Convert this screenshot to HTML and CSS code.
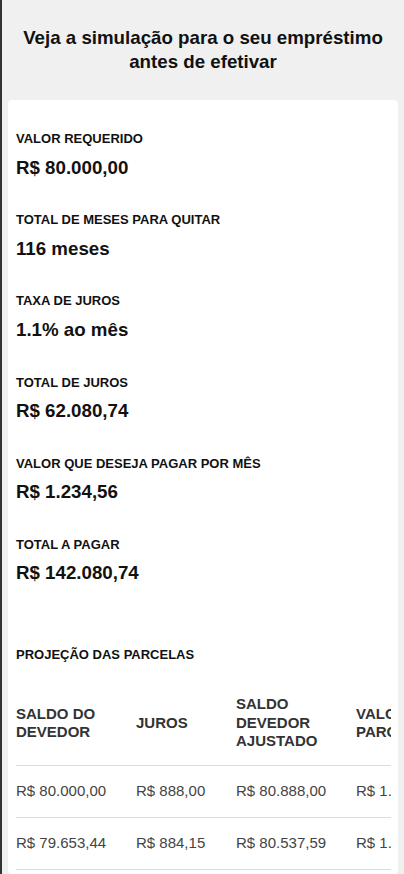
FILE: index.html
```html
<!DOCTYPE html>
<html lang="pt-BR">
<head>
<meta charset="utf-8">
<title>Simulação</title>
<link rel="stylesheet" href="styles.css">
</head>
<body>
<div class="page">
  <h1 class="title">Veja a simulação para o seu empréstimo antes de efetivar</h1>
  <div class="card">
    <div class="item"><div class="label">VALOR REQUERIDO</div><div class="value">R$ 80.000,00</div></div>
    <div class="item"><div class="label">TOTAL DE MESES PARA QUITAR</div><div class="value">116 meses</div></div>
    <div class="item"><div class="label">TAXA DE JUROS</div><div class="value">1.1% ao mês</div></div>
    <div class="item"><div class="label">TOTAL DE JUROS</div><div class="value">R$ 62.080,74</div></div>
    <div class="item"><div class="label">VALOR QUE DESEJA PAGAR POR MÊS</div><div class="value">R$ 1.234,56</div></div>
    <div class="item"><div class="label">TOTAL A PAGAR</div><div class="value">R$ 142.080,74</div></div>
    <div class="label section">PROJEÇÃO DAS PARCELAS</div>
    <div class="table-wrap">
      <table class="table">
        <colgroup>
          <col class="c-wide"><col class="c-narrow"><col class="c-wide"><col class="c-wide"><col class="c-wide">
        </colgroup>
        <thead>
          <tr><th>SALDO DO DEVEDOR</th><th>JUROS</th><th>SALDO DEVEDOR AJUSTADO</th><th>VALOR DA PARCELA</th><th>SALDO FINAL</th></tr>
        </thead>
        <tbody>
          <tr><td>R$ 80.000,00</td><td>R$ 888,00</td><td>R$ 80.888,00</td><td>R$ 1.234,56</td><td>R$ 79.653,44</td></tr>
          <tr><td>R$ 79.653,44</td><td>R$ 884,15</td><td>R$ 80.537,59</td><td>R$ 1.234,56</td><td>R$ 79.303,03</td></tr>
        </tbody>
      </table>
    </div>
  </div>
</div>
</body>
</html>
```
FILE: styles.css
```css
html, body {
  margin: 0;
  padding: 0;
}
body {
  background: #f0f0f0;
  font-family: "Liberation Sans", Arial, sans-serif;
  color: #111;
  border-left: 2px solid #333;
  height: 874px;
  overflow: hidden;
}
.page {
  padding: 0 6px 0 6px;
}
.title {
  margin: 0 0 26px;
  padding: 26px 10px 0;
  text-align: center;
  font-size: 18.72px;
  line-height: 24px;
  font-weight: bold;
}
.card {
  background: #fff;
  border-radius: 4px;
  padding: 31px 8px 0;
  min-height: 743px;
}
.item {
  margin-bottom: 33.7px;
}
.label {
  font-size: 13px;
  line-height: 15px;
  font-weight: bold;
  margin-bottom: 10.5px;
}
.value {
  font-size: 18.72px;
  line-height: 22px;
  font-weight: bold;
}
.section {
  margin-top: 63px;
  margin-bottom: 17px;
}
.table-wrap {
  overflow: hidden;
  margin-right: -1px;
}
.table {
  border-collapse: collapse;
  table-layout: fixed;
  width: 580px;
  font-size: 15px;
  color: #333;
}
.c-wide {
  width: 120px;
}
.c-narrow {
  width: 100px;
}
.table th {
  text-align: left;
  font-weight: bold;
  line-height: 18.5px;
  padding: 16px 24px 14px 0;
  border-bottom: 1px solid #ddd;
}
.table td {
  white-space: nowrap;
  line-height: 19px;
  padding: 15px 10px 17px 0;
  border-bottom: 1px solid #ddd;
  color: #444;
}
```
